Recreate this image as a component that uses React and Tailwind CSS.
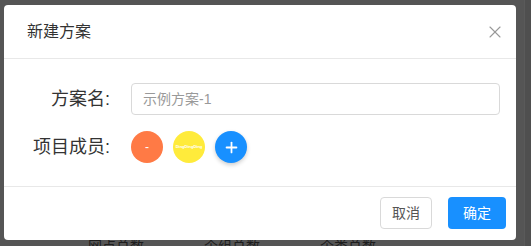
import { X, Plus } from "lucide-react";

const font = { fontFamily: '"Liberation Sans", "Noto Sans CJK SC", sans-serif' };

export default function App() {
  return (
    <div className="relative w-full h-[246px] overflow-hidden bg-[#555555]" style={font}>
      {/* page behind mask */}
      <div className="flex pt-[236px] pl-[88px] gap-[60px] text-[14px] leading-[20px] text-[#1e1e1e]">
        <span>网点总数</span>
        <span>个组总数</span>
        <span>个类总数</span>
      </div>
      <div className="absolute top-0 right-0 w-[7px] h-full bg-[#4f4f4f] border-l border-[#5a5a5a]" />

      {/* modal */}
      <div className="absolute top-[5px] left-[4px] w-[512px] h-[235px] bg-white rounded-[4px] flex flex-col">
        <div className="flex items-center justify-between h-[54px] pl-[23px] pr-[11px] border-b border-[#e8e8e8]">
          <span className="text-[16px] text-[#333]">新建方案</span>
          <X className="w-[20px] h-[20px] text-[#999]" strokeWidth={1.3} />
        </div>

        <div className="flex flex-col gap-[16px] pt-[24px] h-[128px] border-b border-[#e8e8e8]">
          <div className="flex items-center">
            <span className="w-[106px] text-right text-[18px] text-[#333]">方案名:</span>
            <div className="ml-[21px] w-[369px] h-[32px] rounded-[4px] border border-[#d9d9d9] flex items-center px-[11px] text-[14px] text-[#999]">
              示例方案-1
            </div>
          </div>
          <div className="flex items-center">
            <span className="w-[106px] text-right text-[18px] text-[#333]">项目成员:</span>
            <div className="ml-[21px] flex items-center gap-[10px]">
              <div className="w-[32px] h-[32px] rounded-full bg-[#ff7a45] flex items-center justify-center text-white text-[12px]">
                -
              </div>
              <div className="w-[32px] h-[32px] rounded-full bg-[#ffeb3b] flex items-center justify-center text-white text-[4px] font-bold">
                DingDingDing
              </div>
              <div className="w-[32px] h-[32px] rounded-full bg-[#1890ff] flex items-center justify-center text-white shadow-[0_2px_4px_rgba(0,0,0,0.2)]">
                <Plus className="w-[17px] h-[17px]" strokeWidth={2.5} />
              </div>
            </div>
          </div>
        </div>

        <div className="flex justify-end items-center gap-[16px] pr-[10px] pt-[10px]">
          <button className="w-[52px] h-[32px] rounded-[4px] border border-[#d9d9d9] bg-white text-[14px] text-[#555]">
            取消
          </button>
          <button className="w-[58px] h-[32px] rounded-[4px] bg-[#1890ff] text-[14px] text-white">
            确定
          </button>
        </div>
      </div>
    </div>
  );
}
